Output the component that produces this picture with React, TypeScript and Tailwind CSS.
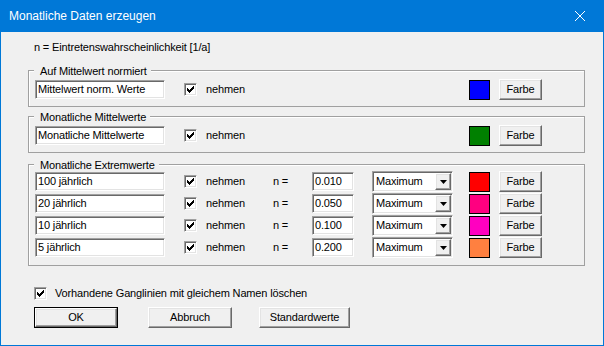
import React from "react";

const extremes = [
  { name: "100 jährlich", n: "0.010", color: "#ff0000" },
  { name: "20 jährlich", n: "0.050", color: "#ff0080" },
  { name: "10 jährlich", n: "0.100", color: "#ff00c0" },
  { name: "5 jährlich", n: "0.200", color: "#ff8040" },
];

// classic win32 3d edges
const sunken =
  "bg-white border border-t-[#a0a0a0] border-l-[#a0a0a0] border-b-white border-r-white shadow-[inset_1px_1px_0_#696969,inset_-1px_-1px_0_#e3e3e3]";
const raised =
  "bg-[#f0f0f0] border border-t-white border-l-white border-b-[#696969] border-r-[#696969] shadow-[inset_-1px_-1px_0_#a0a0a0,inset_1px_1px_0_#e3e3e3]";

const Edit = ({ value, className }: { value: string; className: string }) => (
  <div className={`${sunken} ${className} h-[19px] flex items-center pl-[2px] whitespace-nowrap overflow-hidden`}>
    {value}
  </div>
);

const Check = ({ className = "" }: { className?: string }) => (
  <div className={`${sunken} ${className} w-[13px] h-[13px] shrink-0 flex items-center justify-center`}>
    <svg width="7" height="7" viewBox="0 0 7 7">
      <path d="M0 2h1v1h1v1h1v-1h1v-1h1v-1h1v-1h1v3h-1v1h-1v1h-1v1h-1v1h-1v-1h-1v-1h-1z" fill="#000" />
    </svg>
  </div>
);

const Btn = ({ label, className }: { label: string; className: string }) => (
  <div className={`${raised} ${className} h-[21px] flex items-center justify-center shrink-0`}>{label}</div>
);

const Swatch = ({ color, className }: { color: string; className: string }) => (
  <div className={`${className} w-[21px] h-[20px] border border-black shrink-0`} style={{ backgroundColor: color }} />
);

const Group = ({ title, className, children }: { title: string; className: string; children: React.ReactNode }) => (
  <div className={`relative border border-[#a0a0a0] shadow-[inset_1px_1px_0_#fff] ${className}`}>
    <span className="absolute -top-[6px] left-[5px] pl-[6px] pr-[4px] bg-[#f0f0f0] whitespace-nowrap">{title}</span>
    {children}
  </div>
);

const Dropdown = () => (
  <div className={`${sunken} ml-[18px] w-[81px] h-[21px] flex items-center shrink-0`}>
    <span className="pl-[3px]">Maximum</span>
    <div className={`${raised} ml-auto mr-[1px] w-[16px] h-[17px] flex items-center justify-center`}>
      <svg width="7" height="4" viewBox="0 0 7 4">
        <polygon points="0,0 7,0 3.5,4" fill="#000" />
      </svg>
    </div>
  </div>
);

export default function App() {
  return (
    <div className="w-[604px] h-[346px] flex flex-col bg-[#f0f0f0] border-x border-b border-[#0078d7] text-[11px] leading-[13px] tracking-[-0.15px] text-black font-['Liberation_Sans',Arial,sans-serif]">
      <div className="h-[32px] shrink-0 bg-[#0078d7] flex items-center pl-[8px] text-white text-[12px] tracking-normal">
        <span>Monatliche Daten erzeugen</span>
        <svg className="ml-auto mr-[18px]" width="10" height="10" viewBox="0 0 10 10">
          <path d="M0 0L10 10M10 0L0 10" stroke="#fff" strokeWidth="1" />
        </svg>
      </div>

      <div className="flex flex-col pl-[27px] pr-[18px] pt-[9px]">
        <div className="pl-[6px] h-[13px]">n = Eintretenswahrscheinlichkeit [1/a]</div>

        <Group title="Auf Mittelwert normiert" className="mt-[16px] pt-[9px] pb-[7px]">
          <div className="flex items-center h-[19px] pl-[6px] pr-[42px]">
            <Edit value="Mittelwert norm. Werte" className="w-[130px]" />
            <Check className="ml-[19px]" />
            <span className="ml-[9px]">nehmen</span>
            <Swatch color="#0000ff" className="ml-auto" />
            <Btn label="Farbe" className="ml-[9px] w-[43px]" />
          </div>
        </Group>

        <Group title="Monatliche Mittelwerte" className="mt-[9px] pt-[9px] pb-[7px]">
          <div className="flex items-center h-[19px] pl-[6px] pr-[42px]">
            <Edit value="Monatliche Mittelwerte" className="w-[130px]" />
            <Check className="ml-[19px]" />
            <span className="ml-[9px]">nehmen</span>
            <Swatch color="#008000" className="ml-auto" />
            <Btn label="Farbe" className="ml-[9px] w-[43px]" />
          </div>
        </Group>

        <Group title="Monatliche Extremwerte" className="mt-[11px] pt-[7px] pb-[8px]">
          <div className="flex flex-col gap-[3px]">
            {extremes.map((r) => (
              <div key={r.name} className="flex items-center h-[19px] pl-[6px]">
                <Edit value={r.name} className="w-[130px]" />
                <Check className="ml-[19px]" />
                <span className="ml-[9px] w-[58px]">nehmen</span>
                <span className="ml-[9px] w-[39px]">n =</span>
                <Edit value={r.n} className="w-[42px]" />
                <Dropdown />
                <Swatch color={r.color} className="ml-[16px]" />
                <Btn label="Farbe" className="ml-[9px] w-[43px]" />
              </div>
            ))}
          </div>
        </Group>

        <div className="mt-[21px] flex items-center h-[13px] pl-[6px]">
          <Check />
          <span className="ml-[8px]">Vorhandene Ganglinien mit gleichem Namen löschen</span>
        </div>

        <div className="mt-[7px] flex items-center pl-[6px]">
          <div className="border border-black w-[84px] h-[21px] flex shrink-0">
            <div className={`${raised} flex-1 flex items-center justify-center`}>OK</div>
          </div>
          <Btn label="Abbruch" className="ml-[30px] w-[84px]" />
          <Btn label="Standardwerte" className="ml-[27px] w-[91px]" />
        </div>
      </div>
    </div>
  );
}
